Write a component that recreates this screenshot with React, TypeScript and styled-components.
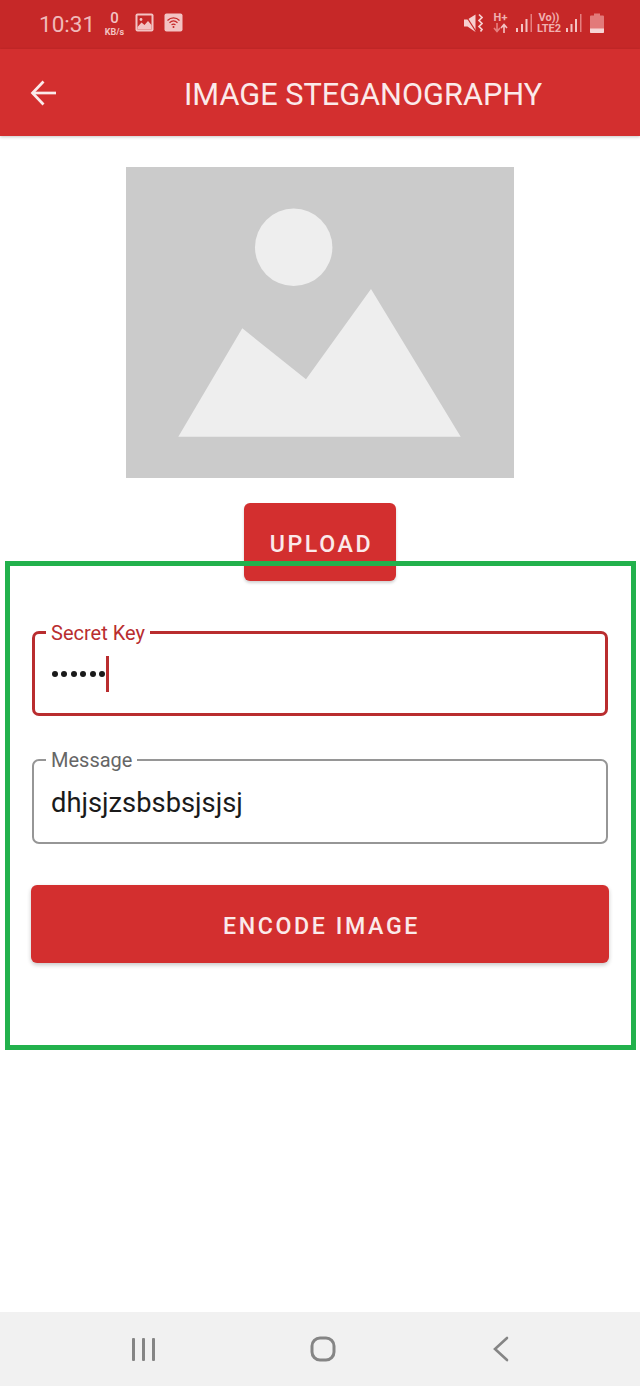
import React from "react";
import styled, { createGlobalStyle } from "styled-components";

const Global = createGlobalStyle`
  html, body { margin: 0; padding: 0; background: #fff; }
  body { font-family: Roboto, "Liberation Sans", sans-serif; }
  * { box-sizing: border-box; }
`;

const Page = styled.div`
  position: relative;
  width: 640px;
  height: 1386px;
  display: flex;
  flex-direction: column;
  overflow: hidden;
  background: #fff;
`;

const StatusBar = styled.div`
  height: 49px;
  flex: none;
  background: #c62828;
  color: #f3c3c3;
  display: flex;
  align-items: center;
  justify-content: space-between;
  padding: 0 36px 4px 39px;
`;

const StatusGroup = styled.div`
  display: flex;
  align-items: center;
`;

const Time = styled.span`
  font-size: 22.5px;
  color: #f0b9b9;
  margin: 3px 8px 0 0;
`;

const Speed = styled.span`
  display: flex;
  flex-direction: column;
  align-items: center;
  width: 23px;
  margin: 2px 9px 0 0;
  font-weight: 700;
  color: #f3c3c3;
  strong { font-size: 15px; line-height: 17px; font-weight: 500; }
  small { font-size: 9px; line-height: 10px; font-weight: 700; }
`;

const NetLabel = styled.span`
  display: flex;
  flex-direction: column;
  align-items: center;
  font-weight: 700;
  font-size: 11px;
  line-height: 11px;
  color: #f0b0b0;
`;

const Toolbar = styled.header`
  position: relative;
  z-index: 1;
  height: 87px;
  flex: none;
  background: #d32f2f;
  box-shadow: 0 1px 3px rgba(0, 0, 0, 0.22);
  display: flex;
  align-items: center;
  padding-left: 29px;
`;

const Title = styled.h1`
  margin: 4px 0 0 125px;
  font-size: 30.7px;
  line-height: 40px;
  font-weight: 400;
  color: #fbeaea;
  white-space: nowrap;
`;

const Content = styled.main`
  flex: 1;
  display: flex;
  flex-direction: column;
  align-items: center;
  padding: 31px 31px 0;
`;

const Placeholder = styled.div`
  width: 388px;
  height: 311px;
  flex: none;
  background: #cbcbcb;
  line-height: 0;
`;

const UploadButton = styled.button`
  width: 152px;
  height: 78px;
  margin-top: 25px;
  padding: 3px 0 0 3px;
  border: 0;
  border-radius: 6px;
  background: #d32f2f;
  color: #fbeaea;
  font: 500 23.2px Roboto, sans-serif;
  letter-spacing: 2.6px;
  box-shadow: 0 2px 3px rgba(0, 0, 0, 0.18);
`;

const Field = styled.div<{ $focused?: boolean }>`
  position: relative;
  width: 576px;
  height: 85px;
  margin-top: ${(p) => (p.$focused ? 50 : 43)}px;
  border: ${(p) => (p.$focused ? "3px solid #b92d2f" : "2px solid #969696")};
  border-radius: 7px;
  display: flex;
  align-items: center;
  padding-left: ${(p) => (p.$focused ? 16 : 17)}px;
`;

const FieldLabel = styled.label<{ $focused?: boolean }>`
  position: absolute;
  top: ${(p) => (p.$focused ? -12 : -12)}px;
  left: ${(p) => (p.$focused ? 11 : 12)}px;
  padding: 0 5px;
  background: #fff;
  font-size: 20px;
  line-height: 22px;
  color: ${(p) => (p.$focused ? "#b92d2f" : "#666")};
`;

const Value = styled.span`
  font-size: 27.3px;
  line-height: 32px;
  margin-top: 2px;
  color: #1a1a1a;
`;

const Dots = styled.span`
  display: flex;
  gap: 3.4px;
  align-items: center;
  margin-left: 1px;
  i {
    width: 6px;
    height: 6px;
    border-radius: 50%;
    background: #1a1a1a;
  }
`;

const Caret = styled.span`
  width: 2.5px;
  height: 36px;
  margin-left: 1.5px;
  background: #b92d2f;
`;

const EncodeButton = styled.button`
  width: 578px;
  height: 78px;
  flex: none;
  margin-top: 41px;
  padding: 3px 0 0 3px;
  border: 0;
  border-radius: 6px;
  background: #d32f2f;
  color: #fbeaea;
  font: 500 23.2px Roboto, sans-serif;
  letter-spacing: 2.6px;
  box-shadow: 0 2px 4px rgba(0, 0, 0, 0.22);
`;

const NavBar = styled.nav`
  height: 74px;
  flex: none;
  background: #f1f1f1;
  display: flex;
  align-items: center;
  justify-content: space-between;
  padding: 0 131px 0 131px;
  svg:nth-child(2) { margin-right: 5px; }
`;

const Annotation = styled.div`
  position: absolute;
  left: 5px;
  top: 561px;
  width: 631px;
  height: 489px;
  border: 5px solid #22b14c;
  pointer-events: none;
`;

export default function App() {
  return (
    <Page>
      <Global />
      <StatusBar>
        <StatusGroup>
          <Time>10:31</Time>
          <Speed>
            <strong>0</strong>
            <small>KB/s</small>
          </Speed>
          <svg width="19" height="19" viewBox="0 0 19 19" style={{ marginRight: 10 }}>
            <rect x="0.5" y="0.5" width="18" height="18" rx="2" fill="#f3c3c3" />
            <rect x="2.5" y="2.5" width="14" height="14" fill="#c62828" />
            <circle cx="6" cy="6.5" r="1.4" fill="#f3c3c3" />
            <path d="M2.5 14 L6.5 9.5 L9.5 12 L13 8 L16.5 12 V16.5 H2.5 Z" fill="#f3c3c3" />
          </svg>
          <svg width="19" height="19" viewBox="0 0 19 19">
            <rect x="0.5" y="0.5" width="18" height="18" rx="2" fill="#f3c3c3" />
            <path d="M3.5 7.5 C7 4 12 4 15.5 7.5 M5.5 9.7 C8 7.4 11 7.4 13.5 9.7 M7.5 11.9 C8.8 10.8 10.2 10.8 11.5 11.9" fill="none" stroke="#c62828" strokeWidth="1.2" />
            <circle cx="9.5" cy="14" r="1" fill="#c62828" />
          </svg>
        </StatusGroup>
        <StatusGroup>
          <svg width="19" height="20" viewBox="0 0 19 20" style={{ marginRight: 10 }}>
            <path d="M0 6.5 H3.5 L11.5 1.5 V19 L3.5 13.5 H0 Z" fill="#f6d0d0" />
            <path d="M1 1.5 L12 18.5" stroke="#c62828" strokeWidth="1.2" />
            <path d="M15 1.5 L18 4.5 L15 7.5 L18 10.5 L15 13.5 L18 16.5 L16.5 18.5" fill="none" stroke="#f6d0d0" strokeWidth="1.7" />
          </svg>
          <NetLabel style={{ width: 15, marginRight: 7 }}>
            <span>H+</span>
            <svg width="15" height="10" viewBox="0 0 15 10">
              <path d="M4 0 V8 M1 5 L4 8.5 L7 5" fill="none" stroke="#e58080" strokeWidth="1.6" />
              <path d="M11 10 V2 M8 5 L11 1.5 L14 5" fill="none" stroke="#f3c3c3" strokeWidth="1.6" />
            </svg>
          </NetLabel>
          <svg width="18" height="20" viewBox="0 0 18 20" style={{ marginRight: 3 }}>
            <path d="M1 15 H3 V19 H1 Z M6 11 H8 V19 H6 Z M10.5 6 H12.5 V19 H10.5 Z" fill="#f3c3c3" />
            <path d="M15.5 1 H17 V19 H15.5 Z" fill="#e58080" />
          </svg>
          <NetLabel style={{ width: 26, marginRight: 3 }}>
            <span>Vo))</span>
            <span>LTE2</span>
          </NetLabel>
          <svg width="17" height="20" viewBox="0 0 17 20" style={{ marginRight: 8 }}>
            <path d="M1 15 H3 V19 H1 Z M5.5 11 H7.5 V19 H5.5 Z M10 6 H12 V19 H10 Z" fill="#f3c3c3" />
            <path d="M15 1 H16.5 V19 H15 Z" fill="#e58080" />
          </svg>
          <svg width="14" height="20" viewBox="0 0 14 20">
            <path d="M4 0.5 H10 V2.5 H13 Q14 2.5 14 3.5 V19 Q14 20 13 20 H1 Q0 20 0 19 V3.5 Q0 2.5 1 2.5 H4 Z" fill="#e27a7a" />
            <path d="M0 15.5 H14 V19 Q14 20 13 20 H1 Q0 20 0 19 Z" fill="#f6d5d5" />
          </svg>
        </StatusGroup>
      </StatusBar>

      <Toolbar>
        <svg width="30" height="30" viewBox="0 0 30 30" fill="none" stroke="#fbeaea" strokeWidth="2.7">
          <path d="M3.5 15 H27" />
          <path d="M14.5 3.5 L3.5 15 L14.5 26.5" />
        </svg>
        <Title>IMAGE STEGANOGRAPHY</Title>
      </Toolbar>

      <Content>
        <Placeholder>
          <svg width="388" height="311" viewBox="0 0 388 311">
            <circle cx="167.7" cy="80.3" r="38.7" fill="#eeeeee" />
            <polygon points="52.3,269.7 116.3,161.3 180,212.3 245,122 334.7,269.7" fill="#eeeeee" />
          </svg>
        </Placeholder>
        <UploadButton>UPLOAD</UploadButton>
        <Field $focused>
          <FieldLabel $focused>Secret Key</FieldLabel>
          <Dots>
            <i /><i /><i /><i /><i /><i />
          </Dots>
          <Caret />
        </Field>
        <Field>
          <FieldLabel>Message</FieldLabel>
          <Value>dhjsjzsbsbsjsjsj</Value>
        </Field>
        <EncodeButton>ENCODE IMAGE</EncodeButton>
      </Content>

      <NavBar>
        <svg width="26" height="24" viewBox="0 0 26 24" fill="#858585">
          <rect x="1" y="1" width="3" height="23" rx="1" />
          <rect x="11" y="1" width="3" height="23" rx="1" />
          <rect x="21" y="1" width="3" height="23" rx="1" />
        </svg>
        <svg width="26" height="26" viewBox="0 0 26 26" fill="none" stroke="#858585" strokeWidth="3">
          <rect x="2" y="2" width="22" height="22" rx="8" />
        </svg>
        <svg width="16" height="26" viewBox="0 0 16 26" fill="none" stroke="#858585" strokeWidth="2.6" strokeLinecap="round">
          <path d="M14 2 L2 13 L14 24" />
        </svg>
      </NavBar>

      <Annotation />
    </Page>
  );
}
